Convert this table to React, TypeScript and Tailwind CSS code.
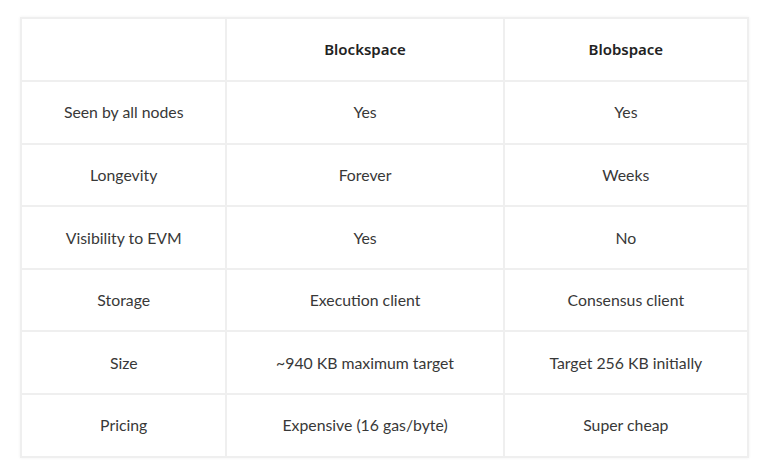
import React from "react";

const rows: [string, string, string][] = [
  ["Seen by all nodes", "Yes", "Yes"],
  ["Longevity", "Forever", "Weeks"],
  ["Visibility to EVM", "Yes", "No"],
  ["Storage", "Execution client", "Consensus client"],
  ["Size", "~940 KB maximum target", "Target 256 KB initially"],
  ["Pricing", "Expensive (16 gas/byte)", "Super cheap"],
];

export default function App() {
  return (
    <div className="w-[779px] h-[476px] bg-white pt-[17px] pl-[20px]" style={{ fontFamily: "Lato, 'Noto Sans', sans-serif" }}>
      <table className="w-[729px] border-collapse text-[15.8px] text-[#383838] shadow-[0_0_3px_rgba(0,0,0,0.06)]">
        <colgroup>
          <col className="w-[206px]" />
          <col className="w-[278px]" />
          <col className="w-[245px]" />
        </colgroup>
        <thead>
          <tr className="h-[63px]">
            <th className="border-2 border-[#efefef]"></th>
            <th className="border-2 border-[#efefef] font-semibold text-[#222] text-[15px]" style={{ fontFamily: "'Noto Sans', sans-serif" }}>Blockspace</th>
            <th className="border-2 border-[#efefef] font-semibold text-[#222] text-[15px]" style={{ fontFamily: "'Noto Sans', sans-serif" }}>Blobspace</th>
          </tr>
        </thead>
        <tbody>
          {rows.map((r) => (
            <tr key={r[0]} className="h-[62.6px]">
              {r.map((c, i) => (
                <td key={i} className="border-2 border-[#efefef] text-center font-normal p-0">
                  {c}
                </td>
              ))}
            </tr>
          ))}
        </tbody>
      </table>
    </div>
  );
}
